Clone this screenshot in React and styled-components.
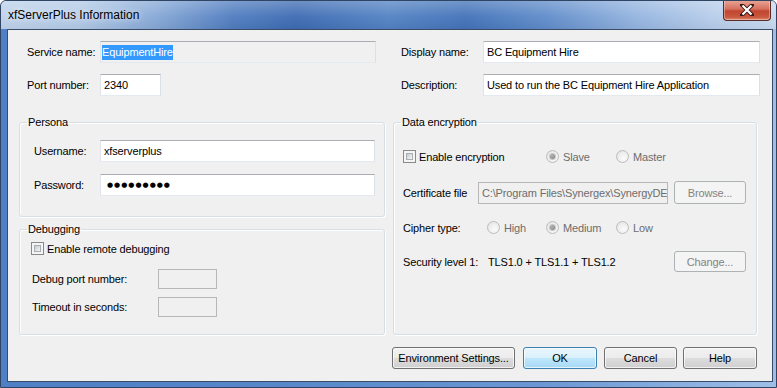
import React from 'react';
import styled, { createGlobalStyle } from 'styled-components';

const GlobalStyle = createGlobalStyle`
  html, body {
    margin: 0;
    padding: 0;
    background: #ffffff;
  }
  body {
    font-family: "Liberation Sans", Arial, sans-serif;
    font-size: 11px;
    letter-spacing: -0.15px;
    color: #000;
  }
`;

const Window = styled.div`
  width: 777px;
  height: 388px;
  box-sizing: border-box;
  display: flex;
  flex-direction: column;
  border: 1px solid #2f4563;
  border-radius: 6px 6px 0 0;
  overflow: hidden;
  background: linear-gradient(90deg, #4f7fc4 0%, #5787c9 35%, #6b97d4 70%, #9ebee7 100%);
`;

const TitleBar = styled.div`
  height: 28px;
  flex: none;
  display: flex;
  align-items: flex-start;
  justify-content: space-between;
  padding: 0 5px 0 7px;
  background:
    linear-gradient(180deg, rgba(255, 255, 255, 0.25) 0%, rgba(255, 255, 255, 0.05) 55%, rgba(0, 0, 0, 0.04) 100%),
    linear-gradient(90deg, #bed2ea 0%, #b3cae7 10%, #86a8d6 20%, #4f7cbf 30%, #3d6bb2 38%, #5282c3 50%, #4272b8 60%, #5e8bc9 70%, #94b4df 82%, #b7cdea 92%, #c8daef 100%);
`;

const Title = styled.span`
  font-size: 12px;
  letter-spacing: 0;
  line-height: 28px;
  color: #000;
  text-shadow: 0 0 6px rgba(255, 255, 255, 0.9);
`;

const CloseButton = styled.div`
  width: 46px;
  height: 20px;
  margin-top: -1px;
  display: flex;
  align-items: center;
  justify-content: center;
  border: 1px solid #5a2a26;
  border-top: none;
  border-radius: 0 0 4px 4px;
  background: linear-gradient(180deg, #e8a898 0%, #d6705e 45%, #c14630 55%, #c8583e 85%, #dc8a70 100%);
  box-shadow: inset 0 0 0 1px rgba(255, 255, 255, 0.35);
`;

const Frame = styled.div`
  flex: 1;
  display: flex;
  padding: 0 5px 6px 6px;
`;

const Client = styled.div`
  flex: 1;
  display: flex;
  flex-direction: column;
  border: 1px solid #3a4d68;
  background: #f0f0f0;
  padding: 11px 12px 12px 11px;
`;

const TopGrid = styled.div`
  display: grid;
  grid-template-columns: 382px 1fr;
  row-gap: 11px;
`;

const Row = styled.div`
  display: flex;
  align-items: center;
  height: ${p => p.h || 22}px;
  margin-top: ${p => p.mt || 0}px;
  padding-left: ${p => p.pl || 0}px;
`;

const Label = styled.span`
  flex: none;
  width: ${p => (p.w ? `${p.w}px` : 'auto')};
  margin-left: ${p => p.ml || 0}px;
  color: ${p => (p.disabled ? '#6d6d6d' : '#000')};
  white-space: nowrap;
`;

const TextBox = styled.div`
  flex: none;
  box-sizing: border-box;
  width: ${p => p.w}px;
  height: ${p => p.h || 22}px;
  display: flex;
  align-items: center;
  padding-left: ${p => p.pad ?? 3}px;
  border: 1px solid;
  border-color: ${p => (p.disabled ? '#b7b7b7' : '#abadb3 #dbdfe6 #e3e9ef #e2e3ea')};
  background: ${p => (p.disabled || p.readOnly ? '#f0f0f0' : '#ffffff')};
  color: ${p => (p.disabled ? '#6d6d6d' : '#000')};
  white-space: nowrap;
  overflow: hidden;
`;

const Selected = styled.span`
  background: #3399ff;
  color: #ffffff;
  line-height: 15px;
`;

const Dots = styled.span`
  font-family: "DejaVu Sans", sans-serif;
  font-size: 7px;
  letter-spacing: 1px;
  color: #000;
`;

const Groups = styled.div`
  display: grid;
  grid-template-columns: 366px 364px;
  column-gap: 8px;
  margin-top: 20px;
`;

const Stack = styled.div`
  display: flex;
  flex-direction: column;
  gap: 6px;
`;

const Group = styled.fieldset`
  margin: 0;
  padding: 0;
  min-width: 0;
  box-sizing: border-box;
  height: ${p => (p.h ? `${p.h}px` : 'auto')};
  border: 1px solid #d5dfe5;
  border-radius: 3px;
  box-shadow: inset 1px 1px 0 #ffffff, 1px 1px 0 #ffffff;
`;

const Legend = styled.legend`
  margin-left: 7px;
  padding: 0 1px;
  line-height: 13px;
  font-size: 11px;
`;

const GroupBody = styled.div`
  display: flex;
  flex-direction: column;
  padding: ${p => p.pt || 0}px ${p => p.pr || 0}px 0 ${p => p.pl || 0}px;
`;

const CheckBox = styled.span`
  flex: none;
  box-sizing: border-box;
  width: 13px;
  height: 13px;
  border: 1px solid #8a8a8a;
  background: #f4f4f4;
  padding: 2px;
  margin-right: 3px;
  &::after {
    content: '';
    display: block;
    box-sizing: border-box;
    width: 100%;
    height: 100%;
    border: 1px solid #a9aeb3;
    background: linear-gradient(135deg, #c4c8cd 0%, #e3e4e6 60%, #f6f6f6 100%);
  }
`;

const Radio = styled.span`
  flex: none;
  box-sizing: border-box;
  width: 13px;
  height: 13px;
  margin-right: 4px;
  border-radius: 50%;
  border: 1px solid #bcbcbc;
  background: radial-gradient(circle at 60% 65%, #fbfbfb 0%, #ececec 60%, #dcdcdc 100%);
  display: flex;
  align-items: center;
  justify-content: center;
  &::after {
    content: '';
    display: ${p => (p.checked ? 'block' : 'none')};
    width: 5px;
    height: 5px;
    border-radius: 50%;
    background: radial-gradient(circle at 40% 40%, #b5b5b5 0%, #8a8a8a 70%);
    box-shadow: 0 0 0 1px #c8c8c8;
  }
`;

const Option = styled.div`
  flex: none;
  display: flex;
  align-items: center;
  width: ${p => (p.w ? `${p.w}px` : 'auto')};
`;

const Button = styled.div`
  flex: none;
  box-sizing: border-box;
  width: ${p => p.w}px;
  height: ${p => p.h || 22}px;
  display: flex;
  align-items: center;
  justify-content: center;
  border-radius: 3px;
  border: 1px solid ${p => (p.disabled ? '#adb2b5' : p.primary ? '#3c7fb1' : '#707070')};
  color: ${p => (p.disabled ? '#838383' : '#000')};
  background: ${p =>
    p.disabled
      ? '#f4f4f4'
      : p.primary
      ? 'linear-gradient(180deg, #eaf6fd 0%, #d9f0fc 50%, #bee6fd 51%, #a7d9f5 100%)'
      : 'linear-gradient(180deg, #f2f2f2 0%, #ebebeb 50%, #dddddd 51%, #cfcfcf 100%)'};
  box-shadow: inset 0 0 0 1px ${p => (p.disabled ? '#f4f4f4' : 'rgba(255, 255, 255, 0.7)')};
  margin-left: ${p => (p.auto ? 'auto' : `${p.ml || 0}px`)};
`;

const ButtonBar = styled.div`
  width: 738px;
  display: flex;
  justify-content: flex-end;
  margin-top: 12px;
`;

const Closer = () => (
  <svg width="14" height="12" viewBox="0 0 14 12">
    <path d="M2 1 L12 11 M12 1 L2 11" stroke="#3b1a16" strokeWidth="4" strokeLinecap="square" />
    <path d="M2.5 1.5 L11.5 10.5 M11.5 1.5 L2.5 10.5" stroke="#ffffff" strokeWidth="2.2" />
  </svg>
);

export default function App() {
  return (
    <>
      <GlobalStyle />
      <Window>
        <TitleBar>
          <Title>xfServerPlus Information</Title>
          <CloseButton>
            <Closer />
          </CloseButton>
        </TitleBar>
        <Frame>
          <Client>
            <TopGrid>
              <Row pl={8}>
                <Label w={73}>Service name:</Label>
                <TextBox w={276} pad={1} readOnly>
                  <Selected>EquipmentHire</Selected>
                </TextBox>
              </Row>
              <Row>
                <Label w={82}>Display name:</Label>
                <TextBox w={277}>BC Equipment Hire</TextBox>
              </Row>
              <Row pl={8}>
                <Label w={73}>Port number:</Label>
                <TextBox w={61}>2340</TextBox>
              </Row>
              <Row>
                <Label w={82}>Description:</Label>
                <TextBox w={277}>Used to run the BC Equipment Hire Application</TextBox>
              </Row>
            </TopGrid>

            <Groups>
              <Stack>
                <Group h={101}>
                  <Legend>Persona</Legend>
                  <GroupBody pt={11} pl={14}>
                    <Row>
                      <Label w={66}>Username:</Label>
                      <TextBox w={275}>xfserverplus</TextBox>
                    </Row>
                    <Row mt={12}>
                      <Label w={66}>Password:</Label>
                      <TextBox w={275} pad={6}>
                        <Dots>●●●●●●●●●</Dots>
                      </TextBox>
                    </Row>
                  </GroupBody>
                </Group>
                <Group h={112}>
                  <Legend>Debugging</Legend>
                  <GroupBody pt={6} pl={11}>
                    <Row h={13}>
                      <CheckBox />
                      <Label>Enable remote debugging</Label>
                    </Row>
                    <Row h={20} mt={14}>
                      <Label w={126} ml={1}>Debug port number:</Label>
                      <TextBox w={59} h={20} disabled />
                    </Row>
                    <Row h={20} mt={8}>
                      <Label w={126} ml={1}>Timeout in seconds:</Label>
                      <TextBox w={59} h={20} disabled />
                    </Row>
                  </GroupBody>
                </Group>
              </Stack>

              <Group>
                <Legend>Data encryption</Legend>
                <GroupBody pt={21} pl={9} pr={10}>
                  <Row h={13}>
                    <Option w={143}>
                      <CheckBox />
                      <Label>Enable encryption</Label>
                    </Option>
                    <Option w={70}>
                      <Radio checked />
                      <Label disabled>Slave</Label>
                    </Option>
                    <Option>
                      <Radio />
                      <Label disabled>Master</Label>
                    </Option>
                  </Row>
                  <Row h={23} mt={18}>
                    <Label w={75}>Certificate file</Label>
                    <TextBox w={190} disabled>C:\Program Files\Synergex\SynergyDE</TextBox>
                    <Button w={72} h={23} ml={6} disabled>Browse...</Button>
                  </Row>
                  <Row h={13} mt={17}>
                    <Label w={84}>Cipher type:</Label>
                    <Option w={59}>
                      <Radio />
                      <Label disabled>High</Label>
                    </Option>
                    <Option w={70}>
                      <Radio checked />
                      <Label disabled>Medium</Label>
                    </Option>
                    <Option>
                      <Radio />
                      <Label disabled>Low</Label>
                    </Option>
                  </Row>
                  <Row h={21} mt={17}>
                    <Label w={85}>Security level 1:</Label>
                    <Label>TLS1.0 + TLS1.1 + TLS1.2</Label>
                    <Button w={72} h={21} auto disabled>Change...</Button>
                  </Row>
                </GroupBody>
              </Group>
            </Groups>

            <ButtonBar>
              <Button w={123}>Environment Settings...</Button>
              <Button w={74} ml={8} primary>OK</Button>
              <Button w={73} ml={7}>Cancel</Button>
              <Button w={74} ml={6}>Help</Button>
            </ButtonBar>
          </Client>
        </Frame>
      </Window>
    </>
  );
}
